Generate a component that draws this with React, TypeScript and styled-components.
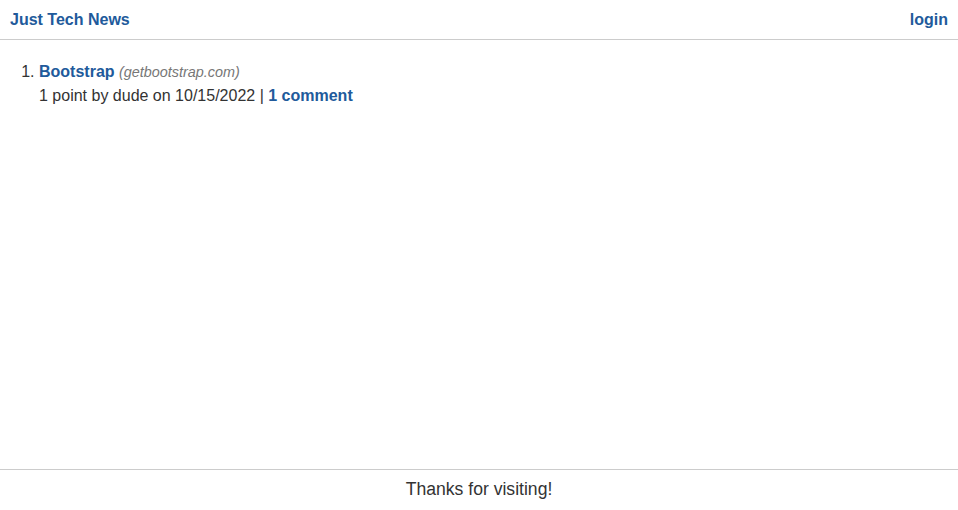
import React from "react";
import styled, { createGlobalStyle } from "styled-components";

const Global = createGlobalStyle`
  html, body { margin: 0; padding: 0; height: 100%; }
  body { font-family: "Liberation Sans", Arial, sans-serif; color: #333; background: #fff; }
  #root { height: 100%; }
`;

const Page = styled.div`
  display: flex;
  flex-direction: column;
  min-height: 100vh;
`;

const Header = styled.header`
  display: flex;
  justify-content: space-between;
  align-items: center;
  padding: 10px;
  line-height: 19px;
  border-bottom: 1px solid #ccc;
`;

const Link = styled.a`
  color: #215a9b;
  font-weight: bold;
  text-decoration: none;
  font-size: 16px;
`;

const Main = styled.main`
  flex: 1;
  padding-top: 20px;
`;

const List = styled.ol`
  margin: 0;
  padding-left: 39px;
  font-size: 16px;
  line-height: 24px;
`;

const Item = styled.li``;

const Domain = styled.span`
  color: #777;
  font-style: italic;
  font-size: 14.4px;
`;

const Meta = styled.div``;

const Footer = styled.footer`
  border-top: 1px solid #ccc;
  padding: 9px 10px 11px;
  text-align: center;
  font-size: 17.6px;
  line-height: 20px;
`;

export default function App() {
  return (
    <>
      <Global />
      <Page>
        <Header>
          <Link href="#">Just Tech News</Link>
          <Link href="#">login</Link>
        </Header>
        <Main>
          <List>
            <Item>
              <Link href="#">Bootstrap</Link> <Domain>(getbootstrap.com)</Domain>
              <Meta>
                1 point by dude on 10/15/2022 | <Link href="#">1 comment</Link>
              </Meta>
            </Item>
          </List>
        </Main>
        <Footer>Thanks for visiting!</Footer>
      </Page>
    </>
  );
}
